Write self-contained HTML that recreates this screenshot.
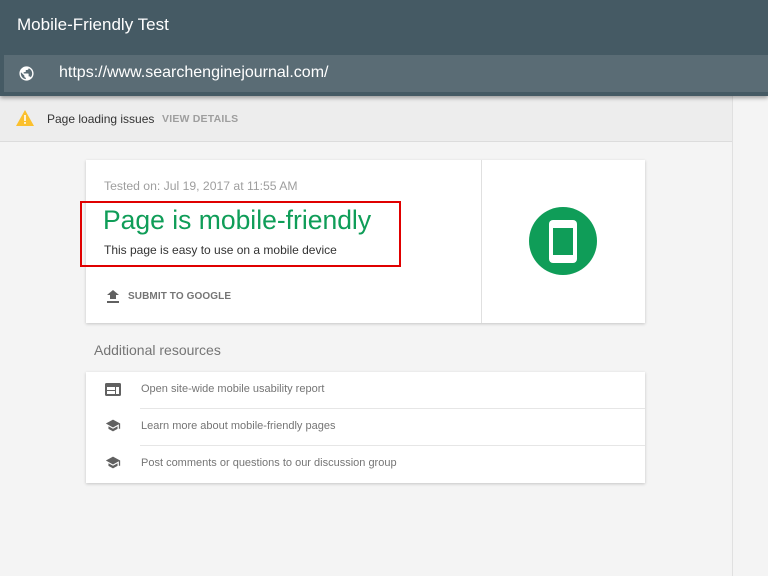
<!DOCTYPE html>
<html><head><style>
*{margin:0;padding:0;box-sizing:border-box}
body{width:768px;height:576px;overflow:hidden;background:#f4f4f4;font-family:"Liberation Sans",Arial,sans-serif;position:relative}
.a{position:absolute}
</style></head><body>
<div class="a" style="left:0;top:0;width:768px;height:96px;background:#455a64;box-shadow:0 2px 4px rgba(0,0,0,.35);z-index:2">
  <div class="a" style="left:17px;top:15px;color:#fff;font-size:17px">Mobile-Friendly Test</div>
  <div class="a" style="left:4px;top:55px;width:764px;height:37px;background:#5a6c75">
    <svg class="a" style="left:14px;top:10px" width="17" height="17" viewBox="0 0 24 24"><path fill="#fff" d="M12 2C6.48 2 2 6.480 2 12s4.48 10 10 10 10-4.48 10-10S17.520 2 12 2zm-1 17.93c-3.95-.49-7-3.85-7-7.93 0-.62.08-1.21.21-1.79L9 15v1c0 1.1.9 2 2 2v1.93zm6.9-2.54c-.26-.81-1-1.39-1.9-1.39h-1v-3c0-.55-.45-1-1-1H8v-2h2c.55 0 1-.45 1-1V7h2c1.1 0 2-.9 2-2v-.41c2.93 1.19 5 4.06 5 7.41 0 2.08-.8 3.97-2.1 5.39z"/></svg>
    <div class="a" style="left:55px;top:9px;color:#fff;font-size:16px">https://www.searchenginejournal.com/</div>
  </div>
</div>
<div class="a" style="left:0;top:96px;width:732px;height:46px;background:#ededed;border-bottom:1px solid #dcdcdc">
  <svg class="a" style="left:16px;top:14px" width="18" height="16" viewBox="0 0 18 16"><path fill="#fbc02d" d="M9 0L18 16H0z"/><rect x="8.2" y="5" width="1.6" height="6" fill="#fff"/><rect x="8.2" y="12" width="1.6" height="1.8" fill="#fff"/></svg>
  <div class="a" style="left:47px;top:16px;font-size:12px;color:#333">Page loading issues</div>
  <div class="a" style="left:162px;top:17px;font-size:10.5px;color:#9e9e9e;font-weight:bold;letter-spacing:.2px">VIEW DETAILS</div>
</div>
<div class="a" style="left:732px;top:96px;width:1px;height:480px;background:#e0e0e0"></div>
<div class="a" style="left:86px;top:160px;width:559px;height:163px;background:#fff;box-shadow:0 1px 3px rgba(0,0,0,.2)">
  <div class="a" style="left:395px;top:0;width:1px;height:163px;background:#e0e0e0"></div>
  <div class="a" style="left:18px;top:19px;font-size:12.2px;color:#9e9e9e">Tested on: Jul 19, 2017 at 11:55 AM</div>
  <div class="a" style="left:17px;top:45px;font-size:26.5px;color:#0f9d58">Page is mobile-friendly</div>
  <div class="a" style="left:18px;top:83px;font-size:12px;color:#333">This page is easy to use on a mobile device</div>
  <svg class="a" style="left:21px;top:130px" width="12" height="13" viewBox="0 0 12 13"><path fill="#616161" d="M3 9V5H0l6-5 6 5H9v4zM0 11h12v2H0z"/></svg>
  <div class="a" style="left:42px;top:131px;font-size:10px;color:#757575;font-weight:bold;letter-spacing:.1px">SUBMIT TO GOOGLE</div>
  <div class="a" style="left:443px;top:47px;width:68px;height:68px;border-radius:50%;background:#0f9d58"></div>
  <div class="a" style="left:463px;top:60px;width:28px;height:43px;border-radius:4px;background:#fff"></div>
  <div class="a" style="left:467px;top:68px;width:20px;height:27px;background:#0f9d58"></div>
</div>
<div class="a" style="left:80px;top:201px;width:321px;height:66px;border:2px solid #e00000"></div>
<div class="a" style="left:94px;top:342px;font-size:14px;color:#757575">Additional resources</div>
<div class="a" style="left:86px;top:372px;width:559px;height:111px;background:#fff;box-shadow:0 1px 3px rgba(0,0,0,.2)">
  <div class="a" style="left:54px;top:36px;width:505px;height:1px;background:#e6e6e6"></div>
  <div class="a" style="left:54px;top:73px;width:505px;height:1px;background:#e6e6e6"></div>
  <svg class="a" style="left:19px;top:11px" width="16" height="13" viewBox="0 0 16 13"><rect x="0" y="0" width="16" height="13" rx="1.5" fill="#616161"/><rect x="2" y="4" width="8" height="3" fill="#fff"/><rect x="2" y="8" width="8" height="3" fill="#fff"/><rect x="11" y="4" width="3" height="7" fill="#fff"/></svg>
  <div class="a" style="left:55px;top:11px;font-size:11px;color:#757575">Open site-wide mobile usability report</div>
  <svg class="a" style="left:19px;top:47px" width="16" height="13" viewBox="0 0 24 20"><path fill="#616161" d="M5 11.2v4L12 19l7-3.8v-4L12 15zM12 1L1 7l11 6 9-4.9V15h2V7z"/></svg>
  <div class="a" style="left:55px;top:48px;font-size:11px;color:#757575">Learn more about mobile-friendly pages</div>
  <svg class="a" style="left:19px;top:84px" width="16" height="13" viewBox="0 0 24 20"><path fill="#616161" d="M5 11.2v4L12 19l7-3.8v-4L12 15zM12 1L1 7l11 6 9-4.9V15h2V7z"/></svg>
  <div class="a" style="left:55px;top:85px;font-size:11px;color:#757575">Post comments or questions to our discussion group</div>
</div>
</body></html>
